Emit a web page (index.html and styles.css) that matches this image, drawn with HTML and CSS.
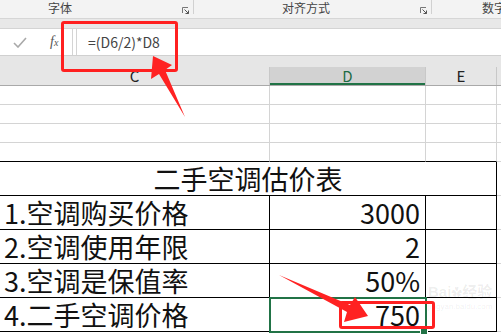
FILE: index.html
```html
<!DOCTYPE html>
<html lang="zh">
<head>
<meta charset="utf-8">
<link rel="stylesheet" href="styles.css">
</head>
<body>
<div class="app">
  <div class="ribbon">
    <div class="group g1">
      <span class="glabel">字体</span>
      <svg class="launcher" width="7" height="7" viewBox="0 0 7 7"><path d="M0.5 6V0.5H6" fill="none" stroke="#777" stroke-width="1"/><path d="M2.5 2.5L6.5 6.5M6.5 3.5V6.5H3.5" fill="none" stroke="#555" stroke-width="1"/></svg>
      <span class="sep"></span>
    </div>
    <div class="group g2">
      <span class="glabel">对齐方式</span>
      <svg class="launcher" width="7" height="7" viewBox="0 0 7 7"><path d="M0.5 6V0.5H6" fill="none" stroke="#777" stroke-width="1"/><path d="M2.5 2.5L6.5 6.5M6.5 3.5V6.5H3.5" fill="none" stroke="#555" stroke-width="1"/></svg>
      <span class="sep"></span>
    </div>
    <div class="group g3">
      <span class="glabel">数字</span>
    </div>
  </div>
  <div class="strip"></div>
  <div class="formula">
    <div class="fbtns">
      <svg class="check" width="14" height="11" viewBox="0 0 14 11"><path d="M1 6L5 10L13 1" fill="none" stroke="#a9a9a9" stroke-width="1.6"/></svg>
      <span class="fx">f<span class="fxx">x</span></span>
    </div>
    <div class="fgap"></div>
    <div class="finput">=(D6/2)*D8</div>
  </div>
  <div class="band"></div>
  <div class="colheads">
    <div class="ch">C</div>
    <div class="ch sel">D</div>
    <div class="ch">E</div>
    <div class="ch last"></div>
  </div>
  <div class="sheet">
    <div class="c"></div><div class="c"></div><div class="c"></div><div class="c f"></div>
    <div class="c"></div><div class="c"></div><div class="c"></div><div class="c f"></div>
    <div class="c"></div><div class="c"></div><div class="c"></div><div class="c f"></div>
    <div class="c tb"></div><div class="c tb"></div><div class="c tb"></div><div class="c f"></div>

    <div class="c t title">二手空调估价表</div><div class="c f tall"></div>

    <div class="c t label">1.空调购买价格</div><div class="c t num">3000</div><div class="c t"></div><div class="c f tall"></div>
    <div class="c t label">2.空调使用年限</div><div class="c t num">2</div><div class="c t"></div><div class="c f tall"></div>
    <div class="c t label">3.空调是保值率</div><div class="c t num">50%</div><div class="c t"></div><div class="c f tall"></div>
    <div class="c t label">4.二手空调价格</div><div class="c t num active">750</div><div class="c t"></div><div class="c f tall"></div>
  </div>

  <div class="watermark"><span class="wm1">Bai<span class="paw">✿</span>经验</span><span class="wm2">jingyan.baidu.com</span></div>
  <div class="redbox rb1"></div>
  <div class="redbox rb2"></div>
  <svg class="arrows" width="501" height="334" viewBox="0 0 501 334">
    <path d="M153 56 L172 65 L165 70 L185 117 L159 74 L151 79 Z" fill="#ff2222"/>
    <path d="M279 275 L350 305 L355 297 L368 316 L344 322 L347 312 Z" fill="#ff2222"/>
  </svg>
</div>
</body>
</html>
```
FILE: styles.css
```css
* { box-sizing: border-box; }
html, body { margin: 0; padding: 0; background: #fff; }
body { font-family: "Noto Sans CJK SC", "Noto Sans", sans-serif; }
.app { position: relative; width: 501px; height: 334px; overflow: hidden; }

.ribbon { display: flex; height: 19px; background: #f3f3f3; border-bottom: 1px solid #d6d6d6; }
.group { display: flex; align-items: flex-start; height: 18px; flex-shrink: 0; }
.glabel { font-size: 12px; line-height: 16px; color: #444; white-space: nowrap; }
.g1 { width: 194px; padding-left: 48px; }
.g2 { width: 238px; padding-left: 88px; }
.g3 { width: 69px; padding-left: 50px; }
.launcher { margin-left: auto; margin-top: 7px; margin-right: 4px; }
.sep { width: 1px; height: 14px; background: #d1d1d1; }

.strip { height: 10px; background: #e8e8e8; border-bottom: 1px solid #d4d4d4; }

.formula { display: flex; height: 27px; background: #fff; border-bottom: 1px solid #d0d0d0; }
.fbtns { width: 73px; display: flex; align-items: center; border-right: 1px solid #d4d4d4; }
.check { margin-left: 13px; }
.fx { margin-left: 23px; font-family: "Liberation Serif", serif; font-style: italic; font-size: 14px; color: #555; line-height: 14px; }
.fxx { font-size: 10px; }
.fgap { width: 4px; border-right: 1px solid #d4d4d4; }
.finput { flex: 1; padding-left: 11px; font-size: 14px; line-height: 26px; color: #444; }

.band { height: 11px; background: #e6e6e6; }

.colheads { display: grid; grid-template-columns: 270px 156px 71px 4px; height: 19px; background: #e6e6e6; border-bottom: 1px solid #a9a9a9; }
.ch { border-right: 1px solid #c8c8c8; font-size: 15px; line-height: 18px; text-align: center; color: #222; }
.ch.sel { background: #d2d2d2; color: #1e6b45; box-shadow: inset 0 -2px 0 #217346; }
.ch.last { border-right: none; }

.sheet { display: grid; grid-template-columns: 270px 156px 71px 4px; grid-template-rows: 19px 19px 19px 19px 34px 34px 34px 34px 34px; }
.c { border-right: 1px solid #d4d4d4; border-bottom: 1px solid #d4d4d4; }
.c.f { border-right: none; }
.c.tb { border-bottom-color: #000; }
.c.t { border-right-color: #000; border-bottom-color: #000; }

.title, .label, .num { display: flex; align-items: flex-end; font-size: 27px; line-height: 32px; color: #111; }
.title { grid-column: 1 / 4; justify-content: center; }
.label { padding-left: 4px; }
.num { justify-content: flex-end; padding-right: 5px; }
.active { position: relative; outline: 2px solid #217346; outline-offset: -1px; }
.active::after { content: ""; position: absolute; right: -3px; bottom: -4px; width: 6px; height: 6px; background: #217346; border: 1px solid #fff; }

.redbox { position: absolute; border: 3px solid #ff2020; border-radius: 3px; }
.rb1 { left: 61px; top: 21px; width: 117px; height: 51px; }
.rb2 { left: 339px; top: 301px; width: 96px; height: 28px; }
.arrows { position: absolute; left: 0; top: 0; }

.watermark { position: absolute; left: 428px; top: 283px; display: flex; flex-direction: column; color: rgba(0,0,0,0.08); font-family: "Liberation Sans", "Noto Sans CJK SC", sans-serif; }
.wm1 { font-size: 15px; font-weight: bold; line-height: 18px; white-space: nowrap; }
.paw { font-size: 11px; }
.wm2 { font-size: 8px; line-height: 10px; white-space: nowrap; }
```
